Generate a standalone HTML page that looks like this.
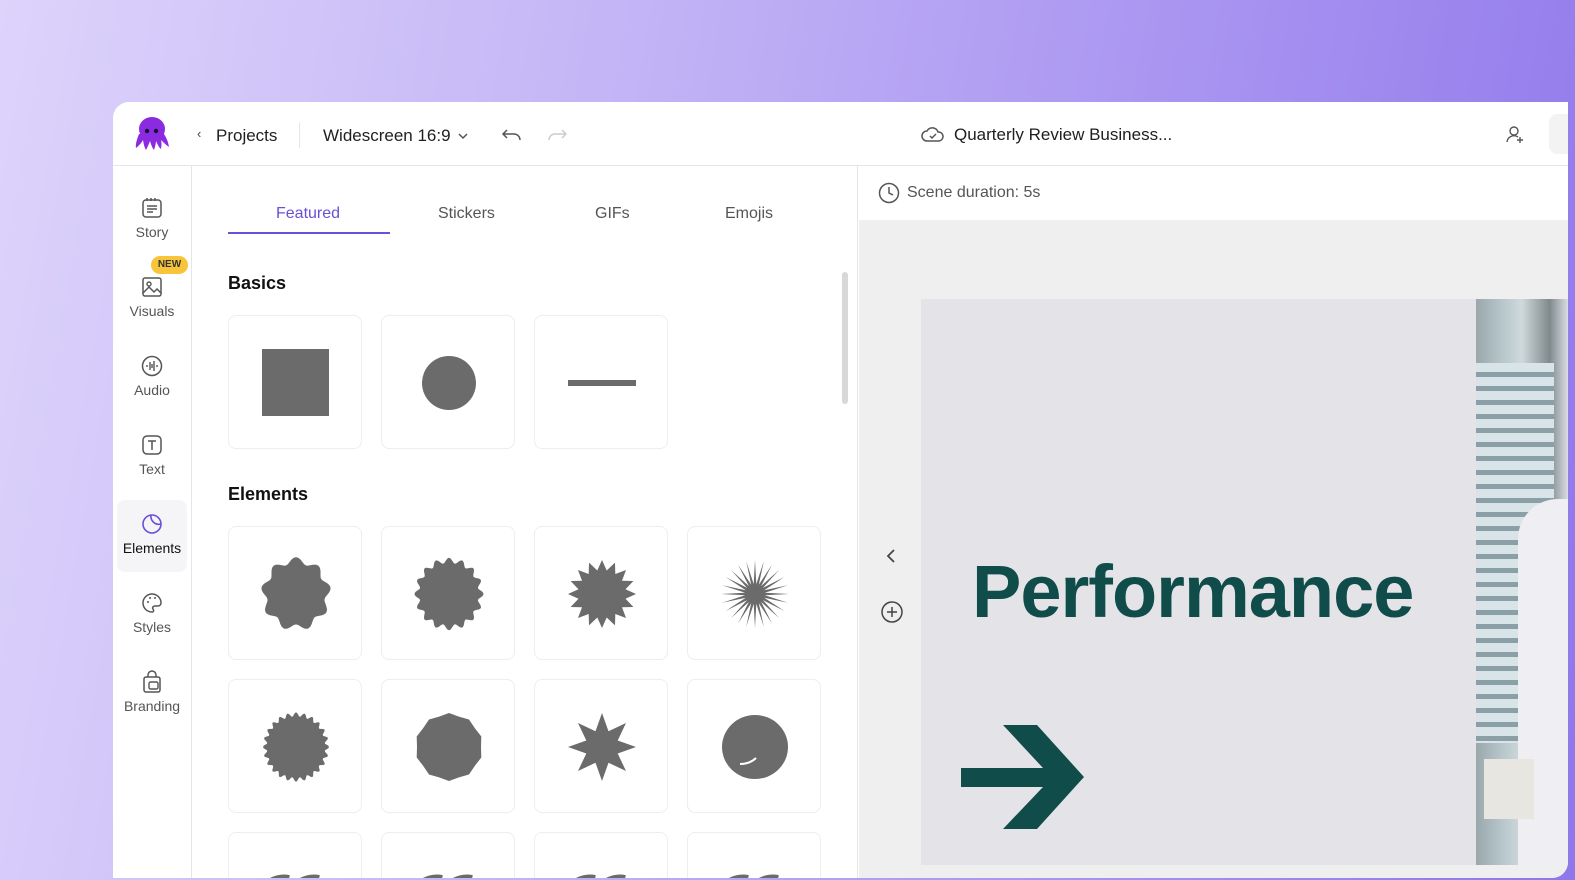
<!DOCTYPE html>
<html><head><meta charset="utf-8">
<style>
*{box-sizing:border-box;margin:0;padding:0}
body{width:1575px;height:880px;overflow:hidden;font-family:"Liberation Sans",sans-serif;background:linear-gradient(100deg,#ddd3fb 0%,#c4b6f6 35%,#a48ff0 75%,#8f77ea 100%);position:relative}
.win{position:absolute;left:113px;top:102px;width:1455px;height:776px;background:#fff;border-radius:16px 0 16px 0;overflow:hidden}
.top{position:absolute;left:0;top:0;right:0;height:64px;border-bottom:1px solid #e6e6e8}
.t{position:absolute;font-size:17px;color:#1f1f22}
.side{position:absolute;left:0;top:64px;width:79px;bottom:0;border-right:1px solid #e6e6e8}
.si{position:absolute;left:4px;width:70px;height:70px;text-align:center;font-size:14px;color:#555}
.si svg{display:block;margin:10px auto 4px}
.panel{position:absolute;left:79px;top:64px;width:666px;bottom:0;border-right:1px solid #e6e6e8}
.tab{position:absolute;top:38px;font-size:16px;color:#555}
.h{position:absolute;font-size:18px;font-weight:bold;color:#111}
.card{position:absolute;width:134px;height:134px;border:1px solid #eeeef0;border-radius:8px;background:#fff}
.card svg{position:absolute;left:0;top:0}
.canvas{position:absolute;left:746px;top:64px;right:0;bottom:0;background:#efeff0}
</style></head><body>
<div class="win">
 <div class="top">
  <svg style="position:absolute;left:20px;top:12px" width="38" height="40" viewBox="0 0 38 40"><ellipse cx="19" cy="15" rx="13" ry="12" fill="#8a2be2"/><path d="M6 20 Q2 30 3 34 Q8 30 10 26 Q11 33 13 36 Q16 30 17 27 Q19 34 21 36 Q23 30 23 27 Q26 34 28 35 Q29 29 28 26 Q33 31 36 33 Q35 26 31 20Z" fill="#8a2be2"/><circle cx="14" cy="17" r="2.2" fill="#1a1030"/><circle cx="23" cy="17" r="2.2" fill="#1a1030"/></svg>
  <div class="t" style="left:84px;top:24px;font-size:13px;color:#444">‹</div>
  <div class="t" style="left:103px;top:24px">Projects</div>
  <div style="position:absolute;left:186px;top:20px;width:1px;height:26px;background:#e6e6e8"></div>
  <div class="t" style="left:210px;top:24px">Widescreen 16:9</div>
  <svg style="position:absolute;left:345px;top:30px" width="10" height="8"><path d="M1 2l4 4 4-4" stroke="#555" stroke-width="1.5" fill="none"/></svg>
  <svg style="position:absolute;left:388px;top:25px" width="22" height="16"><path d="M6 3L2 7l4 4M2 7h11a6 6 0 0 1 6 6" stroke="#555" stroke-width="1.5" fill="none"/></svg>
  <svg style="position:absolute;left:433px;top:25px" width="22" height="16"><path d="M16 3l4 4-4 4M20 7H9a6 6 0 0 0-6 6" stroke="#ccc" stroke-width="1.5" fill="none"/></svg>
  <svg style="position:absolute;left:808px;top:24px" width="24" height="18"><path d="M6 15a5 5 0 0 1 0-10 6 6 0 0 1 11 1 4.5 4.5 0 0 1 1 9z" stroke="#555" stroke-width="1.5" fill="none"/><path d="M9 10l2 2 4-4" stroke="#555" stroke-width="1.5" fill="none"/></svg>
  <div class="t" style="left:841px;top:23px">Quarterly Review Business...</div>
  <svg style="position:absolute;left:1392px;top:22px" width="20" height="20"><circle cx="9" cy="7" r="4" stroke="#555" stroke-width="1.4" fill="none"/><path d="M2 18a7 7 0 0 1 11-5M15 13v6M12 16h6" stroke="#555" stroke-width="1.4" fill="none"/></svg>
  <div style="position:absolute;left:1436px;top:12px;width:40px;height:40px;background:#f3f3f4;border-radius:8px"></div>
 </div>
 <div class="side">
  <div class="si" style="top:20px"><svg width="24" height="24"><rect x="3" y="4" width="18" height="17" rx="3" stroke="#555" stroke-width="1.5" fill="none"/><path d="M7 2v3M11 2v3M15 2v3M7 10h10M7 13h10M7 16h6" stroke="#555" stroke-width="1.5"/></svg>Story</div>
  <div style="position:absolute;left:38px;top:90px;width:37px;height:18px;background:#f8c43a;border-radius:9px;font-size:10px;font-weight:bold;text-align:center;line-height:18px;color:#333">NEW</div>
  <div class="si" style="top:99px"><svg width="24" height="24"><rect x="3" y="3" width="18" height="18" rx="2" stroke="#555" stroke-width="1.5" fill="none"/><circle cx="9" cy="9" r="2" stroke="#555" stroke-width="1.4" fill="none"/><path d="M3 18l6-6 5 5 3-3 4 4" stroke="#555" stroke-width="1.5" fill="none"/></svg>Visuals</div>
  <div class="si" style="top:178px"><svg width="24" height="24"><circle cx="12" cy="12" r="9.5" stroke="#555" stroke-width="1.5" fill="none"/><path d="M7 11v2M10 8v8M12 10v4M14 7v10M17 11v2" stroke="#555" stroke-width="1.4"/></svg>Audio</div>
  <div class="si" style="top:257px"><svg width="24" height="24"><rect x="3" y="3" width="18" height="18" rx="4" stroke="#555" stroke-width="1.5" fill="none"/><path d="M8 8h8M12 8v9" stroke="#555" stroke-width="1.5"/></svg>Text</div>
  <div class="si" style="top:334px;height:72px;padding-top:2px;background:#f5f5f7;border-radius:8px;color:#111"><svg width="24" height="24"><circle cx="12" cy="12" r="9" stroke="#6a4fd8" stroke-width="1.6" fill="none"/><path d="M11 3a8 8 0 0 0 10 9" stroke="#6a4fd8" stroke-width="1.6" fill="none"/></svg>Elements</div>
  <div class="si" style="top:415px"><svg width="24" height="24"><path d="M12 3a9 9 0 1 0 0 18c2 0 2-2 1-3s0-3 2-3h3a3 3 0 0 0 3-3 9 9 0 0 0-9-9z" stroke="#555" stroke-width="1.5" fill="none"/><circle cx="8" cy="11" r="1" fill="#555"/><circle cx="10" cy="7" r="1" fill="#555"/><circle cx="15" cy="7" r="1" fill="#555"/></svg>Styles</div>
  <div class="si" style="top:494px"><svg width="24" height="24"><path d="M8 7V5a4 4 0 0 1 8 0v2" stroke="#555" stroke-width="1.5" fill="none"/><rect x="4" y="7" width="16" height="15" rx="2" stroke="#555" stroke-width="1.5" fill="none"/><rect x="9" y="12" width="9" height="7" rx="1.5" stroke="#555" stroke-width="1.4" fill="none"/></svg>Branding</div>
 </div>
 <div class="panel">
  <div class="tab" style="left:84px;top:39px;color:#6a4fd8">Featured</div>
  <div style="position:absolute;left:36px;top:66px;width:162px;height:2px;background:#6a4fd8"></div>
  <div class="tab" style="left:246px;top:39px">Stickers</div>
  <div class="tab" style="left:403px;top:39px">GIFs</div>
  <div class="tab" style="left:533px;top:39px">Emojis</div>
  <div style="position:absolute;left:650px;top:106px;width:6px;height:132px;background:#d8d8da;border-radius:3px"></div>
  <div class="h" style="left:36px;top:107px">Basics</div>
  <div class="h" style="left:36px;top:318px">Elements</div>
  <div class="card" style="left:36px;top:149px"><svg width="134" height="134"><rect x="33" y="33" width="67" height="67" fill="#6b6b6b"/></svg></div>
  <div class="card" style="left:189px;top:149px"><svg width="134" height="134"><circle cx="67" cy="67" r="27" fill="#6b6b6b"/></svg></div>
  <div class="card" style="left:342px;top:149px"><svg width="134" height="134"><rect x="33" y="64" width="68" height="6" fill="#6b6b6b"/></svg></div>
  <div id="els"></div>
 </div>
 <div class="canvas">
  <div style="position:absolute;left:0;top:0;right:0;height:54px;background:#fff"></div>
  <svg style="position:absolute;left:19px;top:16px" width="22" height="22"><circle cx="11" cy="11" r="9.5" stroke="#555" stroke-width="1.5" fill="none"/><path d="M11 5v6l4 2" stroke="#555" stroke-width="1.5" fill="none"/></svg>
  <div class="t" style="left:48px;top:18px;font-size:16px;color:#555">Scene duration: 5s</div>
  <svg style="position:absolute;left:26px;top:382px" width="14" height="16"><path d="M9 2L3 8l6 6" stroke="#444" stroke-width="1.8" fill="none"/></svg>
  <svg style="position:absolute;left:21px;top:434px" width="24" height="24"><circle cx="12" cy="12" r="10" stroke="#444" stroke-width="1.5" fill="none"/><path d="M12 7v10M7 12h10" stroke="#444" stroke-width="1.5"/></svg>
  <div style="position:absolute;left:62px;top:133px;width:556px;height:566px;background:#e4e4e8">
   <div style="position:absolute;left:51px;top:250px;font-size:74px;font-weight:900;color:#0f4c4a;letter-spacing:-1px;font-family:'Liberation Sans',sans-serif">Performance</div>
   <svg style="position:absolute;left:40px;top:426px" width="124" height="106"><path d="M0 43h82L42 0h34l47 52-47 52H42l40-42H0z" fill="#0f4c4a"/></svg>
  </div>
  <div style="position:absolute;left:617px;top:133px;width:92px;height:566px;background:linear-gradient(90deg,#9aa8ac,#b8c8cc 30%,#cfd9dc 50%,#808a8c 80%,#dadde3)">
   <div style="position:absolute;left:0;top:64px;width:78px;height:380px;background:repeating-linear-gradient(180deg,#d9e4e8 0 9px,#8aa0a6 9px 14px)"></div>
   <div style="position:absolute;left:42px;top:200px;width:60px;height:366px;background:#eeeef3;border-radius:40px 0 0 0"></div>
   <div style="position:absolute;left:8px;top:460px;width:50px;height:60px;background:#e8e6e0"></div>
  </div>
 </div>
</div>
<script>
function star(cx,cy,n,ro,ri,rot){let p=[];for(let i=0;i<2*n;i++){let a=Math.PI*i/n+(rot||0);let r=i%2?ri:ro;p.push((cx+r*Math.sin(a)).toFixed(1)+','+(cy-r*Math.cos(a)).toFixed(1));}return '<polygon points="'+p.join(' ')+'" fill="#6b6b6b"/>';}
function wave(cx,cy,n,r,amp,ry){let p=[];for(let i=0;i<200;i++){let a=2*Math.PI*i/200;let rr=r+amp*Math.cos(n*a);p.push((cx+rr*Math.sin(a)).toFixed(1)+','+(cy-rr*(ry||1)*Math.cos(a)).toFixed(1));}return '<polygon points="'+p.join(' ')+'" fill="#6b6b6b"/>';}
const shapes=[wave(67,67,9,32,3,1.05),wave(67,67,16,32,2.5,1.05),star(67,67,16,34,24),star(67,67,24,34,10),wave(67,67,24,31,2,1.05),star(67,67,10,34,32),star(67,67,8,34,17),'<ellipse cx="67" cy="67" rx="33" ry="32" fill="#6b6b6b"/><path d="M52 84q10 0 16-6" stroke="#fff" stroke-width="2" fill="none"/>'];
let h='';const xs=[36,189,342,495],ys=[360,513,666];
for(let i=0;i<12;i++){let s=i<8?shapes[i]:'<path d="M40 50q10-6 20-4M70 50q10-6 20-4" stroke="#6b6b6b" stroke-width="8" fill="none"/>';h+='<div class="card" style="left:'+xs[i%4]+'px;top:'+ys[Math.floor(i/4)]+'px"><svg width="134" height="134">'+s+'</svg></div>';}
document.getElementById('els').innerHTML=h;
</script>
</body></html>
